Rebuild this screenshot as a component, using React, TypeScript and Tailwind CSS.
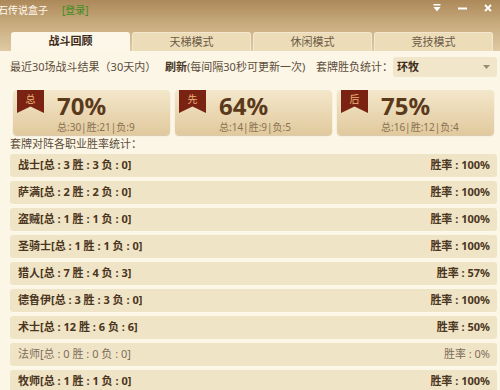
import React from "react";

const rows = [
  { name: "战士", t: 3, w: 3, l: 0, r: "100%" },
  { name: "萨满", t: 2, w: 2, l: 0, r: "100%" },
  { name: "盗贼", t: 1, w: 1, l: 0, r: "100%" },
  { name: "圣骑士", t: 1, w: 1, l: 0, r: "100%" },
  { name: "猎人", t: 7, w: 4, l: 3, r: "57%" },
  { name: "德鲁伊", t: 3, w: 3, l: 0, r: "100%" },
  { name: "术士", t: 12, w: 6, l: 6, r: "50%" },
  { name: "法师", t: 0, w: 0, l: 0, r: "0%" },
  { name: "牧师", t: 1, w: 1, l: 0, r: "100%" },
];

const cards = [
  { tag: "总", pct: "70%", sub: "总:30|胜:21|负:9" },
  { tag: "先", pct: "64%", sub: "总:14|胜:9|负:5" },
  { tag: "后", pct: "75%", sub: "总:16|胜:12|负:4" },
];

const tabs = ["战斗回顾", "天梯模式", "休闲模式", "竞技模式"];

function Ribbon({ ch }: { ch: string }) {
  return (
    <div className="absolute left-[4px] top-0 w-[27px] h-[23px]">
      <svg width="27" height="23" viewBox="0 0 27 23" className="absolute inset-0">
        <polygon points="0,0 27,0 27,23 13.5,16.5 0,23" fill="#7a2312" />
      </svg>
      <div className="absolute left-0 right-0 top-[3px] text-center text-[10px] leading-[12px] text-[#f0b47a]">
        {ch}
      </div>
    </div>
  );
}

export default function App() {
  return (
    <div
      className="relative w-[500px] h-[390px] overflow-hidden bg-[#fbf6e6]"
      style={{ fontFamily: '"Noto Sans", "Noto Sans CJK SC", sans-serif' }}
    >
      {/* header */}
      <div className="h-[51px] bg-gradient-to-b from-[#ad895a] via-[#c9ad80] to-[#dfcaa3]">
        <div className="h-[32px] flex items-start pt-[3px] relative">
          <span className="ml-[-2px] text-[10px] leading-[14px] text-[#fffaf0]">石传说盒子</span>
          <span className="ml-[14px] text-[10px] leading-[14px] text-[#3d8d1f]">[登录]</span>
          <div className="ml-auto flex items-center gap-[17px] pr-[8px] pt-[1px]">
            <svg width="8" height="8" viewBox="0 0 8 8">
              <rect x="0.5" y="0" width="7" height="1.5" fill="#fff" />
              <polygon points="0.5,3 7.5,3 4,7.5" fill="#fff" />
            </svg>
            <svg width="9" height="8" viewBox="0 0 9 8">
              <rect x="0" y="3.5" width="9" height="2" fill="#fff" />
            </svg>
            <svg width="8" height="8" viewBox="0 0 8 8">
              <path d="M1 1 L7 7 M7 1 L1 7" stroke="#fff" strokeWidth="1.8" />
            </svg>
          </div>
        </div>
        <div className="flex pl-[11px] gap-[2px] h-[19px] items-end">
          {tabs.map((t, i) => (
            <div
              key={t}
              className={
                i === 0
                  ? "w-[119px] h-[19px] rounded-t-[3px] bg-[#fcf7e8] flex items-center justify-center text-[11px] font-bold text-[#3e2c1a]"
                  : "w-[119px] h-[19px] rounded-t-[3px] bg-[#ecdcb8] border border-b-0 border-[#f3e8cf] flex items-center justify-center text-[11px] text-[#6b5a46]"
              }
            >
              {t}
            </div>
          ))}
        </div>
      </div>

      {/* content */}
      <div className="pl-[10px] pr-[3px] pt-[6px]">
        <div className="flex items-center h-[20px] text-[11px] text-[#5e4d3b]">
          <span className="w-[155px]">最近30场战斗结果（30天内）</span>
          <span>
            <b className="font-bold text-[#4a3826]">刷新</b>(每间隔30秒可更新一次)
          </span>
          <span className="ml-auto">套牌胜负统计：</span>
          <div className="w-[104px] h-[20px] rounded-[3px] bg-[#f1e6ca] flex items-center pl-[4px] pr-[7px]">
            <span className="font-bold text-[#3e2c1a]">环牧</span>
            <svg width="7" height="4" viewBox="0 0 7 4" className="ml-auto">
              <polygon points="0,0 7,0 3.5,4" fill="#9a8b78" />
            </svg>
          </div>
        </div>

        <div className="flex gap-[5px] pl-[3px] mt-[13px]">
          {cards.map((c) => (
            <div
              key={c.tag}
              className="relative w-[157px] h-[45px] rounded-[4px] bg-gradient-to-b from-[#f3e7ca] to-[#e1c99d] shadow-[0_1px_1px_rgba(150,110,60,0.35)]"
            >
              <Ribbon ch={c.tag} />
              <div className="pl-[44px] pt-[4px]">
                <div className="text-[24px] leading-[24px] font-bold text-[#5a3a1b]">{c.pct}</div>
                <div className="mt-[4px] text-[10px] leading-[11px] text-[#8a7152]">{c.sub}</div>
              </div>
            </div>
          ))}
        </div>

        <div className="h-[19px] flex items-center text-[11px] text-[#5e4d3b]">套牌对阵各职业胜率统计：</div>

        <div className="flex flex-col gap-[4px]">
          {rows.map((r) => {
            const dim = r.name === "法师";
            return (
              <div
                key={r.name}
                className={
                  "h-[23px] shrink-0 rounded-[3px] bg-[#f0e4c6] shadow-[0_1px_0_#fdf8ec] flex items-center justify-between pl-[8px] pr-[7px] text-[11px] " +
                  (dim ? "font-normal text-[#7d6d5b]" : "font-bold text-[#4a3520]")
                }
              >
                <span>
                  {r.name}[总 : {r.t} 胜 : {r.w} 负 : {r.l}]
                </span>
                <span>胜率 : {r.r}</span>
              </div>
            );
          })}
        </div>
      </div>
    </div>
  );
}
